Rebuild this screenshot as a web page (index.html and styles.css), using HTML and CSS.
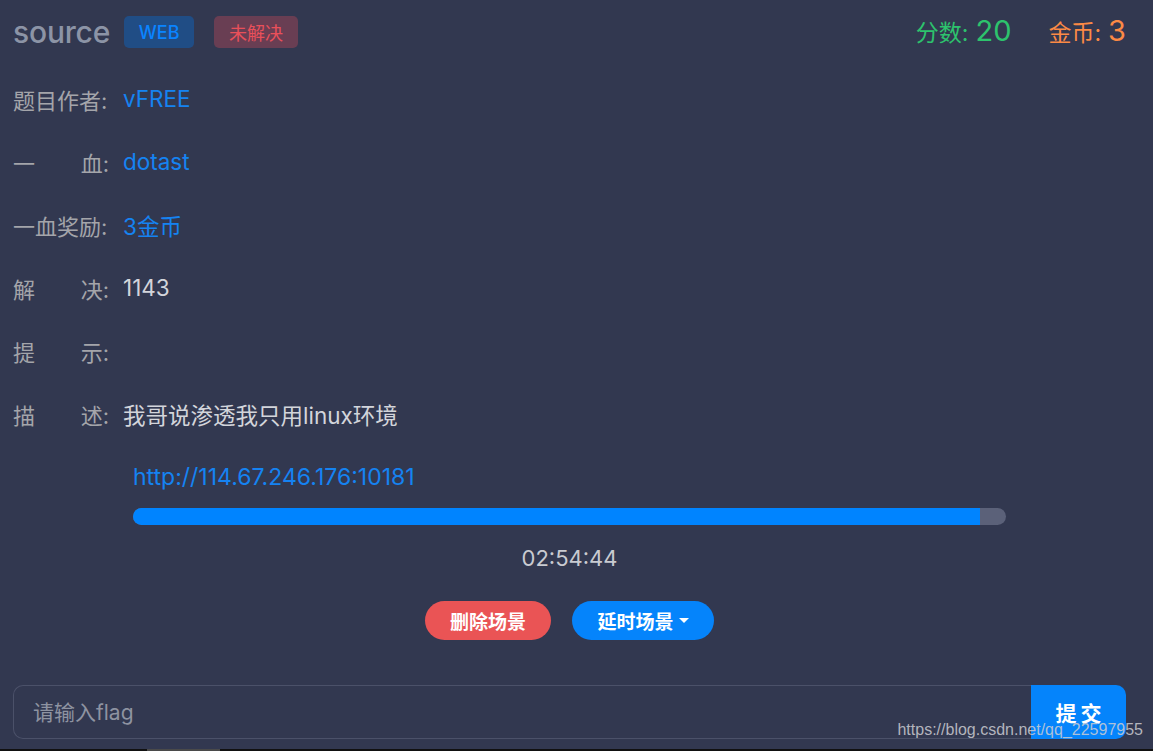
FILE: index.html
```html
<!DOCTYPE html>
<html lang="zh-CN">
<head>
<meta charset="utf-8">
<title>source</title>
<link rel="stylesheet" href="styles.css">
</head>
<body>
<div class="page">
  <header class="head">
    <div class="head-left">
      <h1 class="title">source</h1>
      <span class="badge badge-web">WEB</span>
      <span class="badge badge-unsolved">未解决</span>
    </div>
    <div class="head-right">
      <span class="stat stat-score"><span class="stat-label">分数:</span><span class="stat-num">20</span></span>
      <span class="stat stat-coin"><span class="stat-label">金币:</span><span class="stat-num">3</span></span>
    </div>
  </header>

  <div class="info">
    <div class="row"><span class="label"><span>题目作者:</span></span><span class="val val-link">vFREE</span></div>
    <div class="row"><span class="label label-split"><span>一</span><span>血:</span></span><span class="val val-link">dotast</span></div>
    <div class="row"><span class="label"><span>一血奖励:</span></span><span class="val val-link">3金币</span></div>
    <div class="row"><span class="label label-split"><span>解</span><span>决:</span></span><span class="val">1143</span></div>
    <div class="row"><span class="label label-split"><span>提</span><span>示:</span></span><span class="val"></span></div>
    <div class="row"><span class="label label-split"><span>描</span><span>述:</span></span><span class="val">我哥说渗透我只用linux环境</span></div>
  </div>

  <section class="scene">
    <a class="scene-url" href="#">http://114.67.246.176:10181</a>
    <div class="bar"><div class="bar-fill" style="width: 97.0%"></div></div>
    <div class="timer">02:54:44</div>
    <div class="actions">
      <button class="btn btn-danger">删除场景</button>
      <button class="btn btn-primary">延时场景<span class="caret"></span></button>
    </div>
  </section>

  <form class="flag-form">
    <input class="flag-input" type="text" placeholder="请输入flag">
    <button class="flag-submit" type="button">提交</button>
  </form>
</div>
<div class="watermark">https://blog.csdn.net/qq_22597955</div>
<div class="bottom-strip"><div class="bottom-thumb"></div></div>
</body>
</html>
```

FILE: styles.css
```css
* { box-sizing: border-box; }

html, body {
  margin: 0;
  padding: 0;
  background: #323850;
  height: 100%;
  overflow: hidden;
}

body {
  font-family: Inter, "Noto Sans CJK SC", sans-serif;
  color: #a3a6ae;
  position: relative;
}

.page {
  padding: 16px 27px 0 13px;
}

.head {
  display: flex;
  justify-content: space-between;
  align-items: center;
  height: 32px;
}

.head-left {
  display: flex;
  align-items: center;
}

.title {
  margin: 0 14px 0 0;
  font-size: 30px;
  font-weight: 500;
  color: #8c94a6;
  line-height: 32px;
  letter-spacing: -0.2px;
}

.badge {
  display: inline-flex;
  align-items: center;
  justify-content: center;
  height: 32px;
  border-radius: 5px;
  font-size: 18px;
}

.badge-web {
  width: 70px;
  background: #204d85;
  color: #0a84ff;
  font-weight: 500;
}

.badge-unsolved {
  width: 84px;
  margin-left: 20px;
  background: #693e53;
  color: #e9505a;
  font-size: 18px;
}

.head-right {
  display: flex;
  align-items: baseline;
  gap: 37px;
  margin-top: -4px;
}

.stat-label {
  font-size: 23px;
  margin-right: 7px;
}

.stat-num {
  font-size: 29px;
}

.stat-score { color: #2dc36d; }
.stat-coin { color: #fc8a45; }

.info {
  margin-top: 19px;
}

.row {
  display: flex;
  align-items: center;
  height: 63px;
  font-size: 22px;
}

.label {
  display: flex;
  justify-content: space-between;
  width: 96px;
  margin-right: 14px;
  color: #a4a5aa;
  white-space: nowrap;
}

.val {
  color: #d3d5db;
  font-size: 22.5px;
}

.val-link {
  color: #1583f2;
}

.scene {
  padding: 0 120px;
  display: flex;
  flex-direction: column;
}

.scene-url {
  margin-top: 17px;
  line-height: 30px;
  font-size: 23px;
  color: #1583f2;
  text-decoration: none;
  align-self: flex-start;
}

.bar {
  margin-top: 16px;
  height: 17px;
  border-radius: 9px;
  background: #5b6179;
  overflow: hidden;
}

.bar-fill {
  height: 100%;
  background: #0084ff;
}

.timer {
  margin-top: 18px;
  text-align: center;
  line-height: 30px;
  font-size: 22px;
  color: #c9cbd1;
}

.actions {
  margin-top: 28px;
  display: flex;
  justify-content: center;
  gap: 21px;
}

.btn {
  height: 39px;
  border: none;
  border-radius: 20px;
  color: #fff;
  font-family: inherit;
  font-size: 19px;
  font-weight: 700;
  display: inline-flex;
  align-items: center;
  justify-content: center;
  padding: 0;
}

.btn-danger {
  width: 126px;
  background: #ea5455;
}

.btn-primary {
  width: 142px;
  background: #0584fb;
}

.caret {
  width: 0;
  height: 0;
  margin-left: 5px;
  border-left: 5px solid transparent;
  border-right: 5px solid transparent;
  border-top: 5px solid #fff;
}

.flag-form {
  margin: 45px 0 0;
  display: flex;
  height: 54px;
}

.flag-input {
  flex: 1;
  height: 54px;
  border: 1px solid #4b5169;
  border-right: none;
  border-radius: 10px 0 0 10px;
  background: transparent;
  padding: 0 19px;
  font-family: inherit;
  font-size: 21px;
  color: #d3d5db;
  outline: none;
}

.flag-input::placeholder {
  color: #8e93a1;
}

.flag-submit {
  width: 95px;
  height: 54px;
  border: none;
  border-radius: 0 10px 10px 0;
  background: #0584fb;
  color: #fff;
  font-family: inherit;
  font-size: 21px;
  font-weight: 700;
  letter-spacing: 4px;
  padding: 0 0 0 4px;
}

.watermark {
  position: absolute;
  right: 10px;
  top: 721px;
  font-family: "Liberation Sans", Arial, sans-serif;
  font-size: 16px;
  color: rgba(205, 205, 210, 0.85);
  pointer-events: none;
}

.bottom-strip {
  position: absolute;
  left: 0;
  right: 0;
  top: 749px;
  height: 2px;
  background: #111;
}

.bottom-thumb {
  margin-left: 147px;
  width: 73px;
  height: 2px;
  background: #4a4a4a;
}
```
